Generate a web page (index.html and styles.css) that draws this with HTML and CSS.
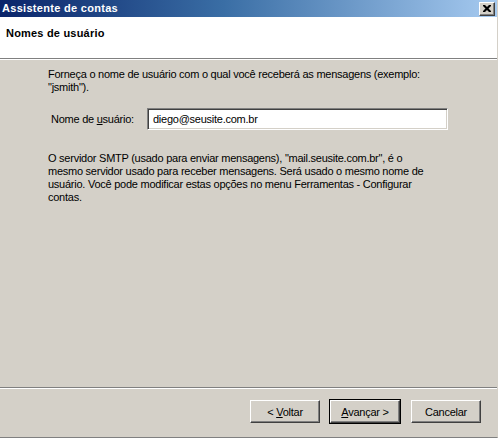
FILE: index.html
```html
<!DOCTYPE html>
<html lang="pt-BR">
<head>
<meta charset="utf-8">
<title>Assistente de contas</title>
<link rel="stylesheet" href="styles.css">
</head>
<body>
<div class="window">
  <div class="titlebar">
    <span class="title">Assistente de contas</span>
    <span class="close-btn">
      <svg width="8" height="7" viewBox="0 0 8 7"><path d="M0 0h2l2 2 2-2h2v1l-2.5 2.5L8 6v1H6L4 5 2 7H0V6l2.5-2.5L0 1z" fill="#000"/></svg>
    </span>
  </div>
  <div class="header">
    <span class="header-title">Nomes de usuário</span>
  </div>
  <div class="content">
    <p class="para">Forneça o nome de usuário com o qual você receberá as mensagens (exemplo:<br>"jsmith").</p>
    <div class="field-row">
      <label class="field-label" for="user">Nome de <u>u</u>suário:</label>
      <input class="field-input" id="user" type="text" value="diego@seusite.com.br">
    </div>
    <p class="para para-info">O servidor SMTP (usado para enviar mensagens), "mail.seusite.com.br", é o<br>mesmo servidor usado para receber mensagens. Será usado o mesmo nome de<br>usuário. Você pode modificar estas opções no menu Ferramentas - Configurar<br>contas.</p>
  </div>
  <div class="footer">
    <div class="buttons">
      <button class="btn">&lt; <u>V</u>oltar</button>
      <button class="btn btn-default"><u>A</u>vançar &gt;</button>
      <button class="btn btn-cancel">Cancelar</button>
    </div>
  </div>
</div>
</body>
</html>
```
FILE: styles.css
```css
html, body {
  margin: 0;
  padding: 0;
}
body {
  width: 498px;
  height: 438px;
  overflow: hidden;
  font-family: "Liberation Sans", Arial, sans-serif;
  font-size: 11px;
  letter-spacing: -0.25px;
  color: #000;
  background: #d4d0c8;
}
.window {
  width: 498px;
  height: 438px;
  display: flex;
  flex-direction: column;
  box-sizing: border-box;
  border-bottom: 1px solid #808080;
  border-right: 1px solid #d4d0c8;
}
.titlebar {
  height: 17px;
  flex: none;
  display: flex;
  align-items: center;
  justify-content: space-between;
  background: linear-gradient(to right, #0a246a 0%, #3a6ea5 45%, #a6caf0 100%);
  padding: 0 2px 0 2px;
}
.title {
  color: #fff;
  font-weight: bold;
  font-size: 11px;
  letter-spacing: 0.3px;
  line-height: 17px;
}
.close-btn {
  width: 16px;
  height: 14px;
  box-sizing: border-box;
  background: #d4d0c8;
  border: 1px solid;
  border-color: #fff #404040 #404040 #fff;
  box-shadow: inset -1px -1px #808080;
  display: flex;
  align-items: center;
  justify-content: center;
  margin-top: 1px;
}
.close-btn svg {
  display: block;
  margin-left: -1px;
  margin-top: -1px;
}
.header {
  height: 42px;
  flex: none;
  background: #fff;
  border-bottom: 1px solid #808080;
  box-shadow: 0 1px 0 #fff;
  box-sizing: border-box;
  padding: 10px 0 0 6px;
}
.header-title {
  font-weight: bold;
  letter-spacing: 0.2px;
  line-height: 13px;
}
.content {
  flex: 1;
  padding: 9px 0 0 48px;
}
.para {
  margin: 0;
  line-height: 13px;
}
.field-row {
  display: flex;
  align-items: center;
  margin-top: 14px;
  height: 22px;
}
.field-label {
  width: 99px;
  padding-left: 3px;
  box-sizing: border-box;
}
.field-input {
  width: 301px;
  height: 22px;
  box-sizing: border-box;
  margin: 0;
  font: inherit;
  letter-spacing: -0.25px;
  padding: 0 0 0 5px;
  background: #fff;
  border: 1px solid;
  border-color: #808080 #fff #fff #808080;
  box-shadow: inset 1px 1px #404040, inset -1px -1px #d4d0c8;
  outline: none;
}
.para-info {
  margin-top: 22px;
}
.footer {
  flex: none;
  border-top: 1px solid #808080;
  box-shadow: inset 0 1px 0 #fff;
  height: 50px;
  box-sizing: border-box;
  padding-top: 12px;
}
.buttons {
  display: flex;
  justify-content: flex-end;
  padding-right: 16px;
}
.btn {
  width: 70px;
  height: 23px;
  box-sizing: border-box;
  margin: 0 0 0 9px;
  padding: 0;
  font: inherit;
  letter-spacing: -0.25px;
  color: #000;
  background: #d4d0c8;
  border: 1px solid;
  border-color: #fff #404040 #404040 #fff;
  box-shadow: inset -1px -1px #808080;
}
.btn-default {
  margin-left: 10px;
  margin-right: 1px;
  box-shadow: 0 0 0 1px #000, inset -1px -1px #808080;
}
.btn-cancel {
  margin-left: 10px;
}
```
